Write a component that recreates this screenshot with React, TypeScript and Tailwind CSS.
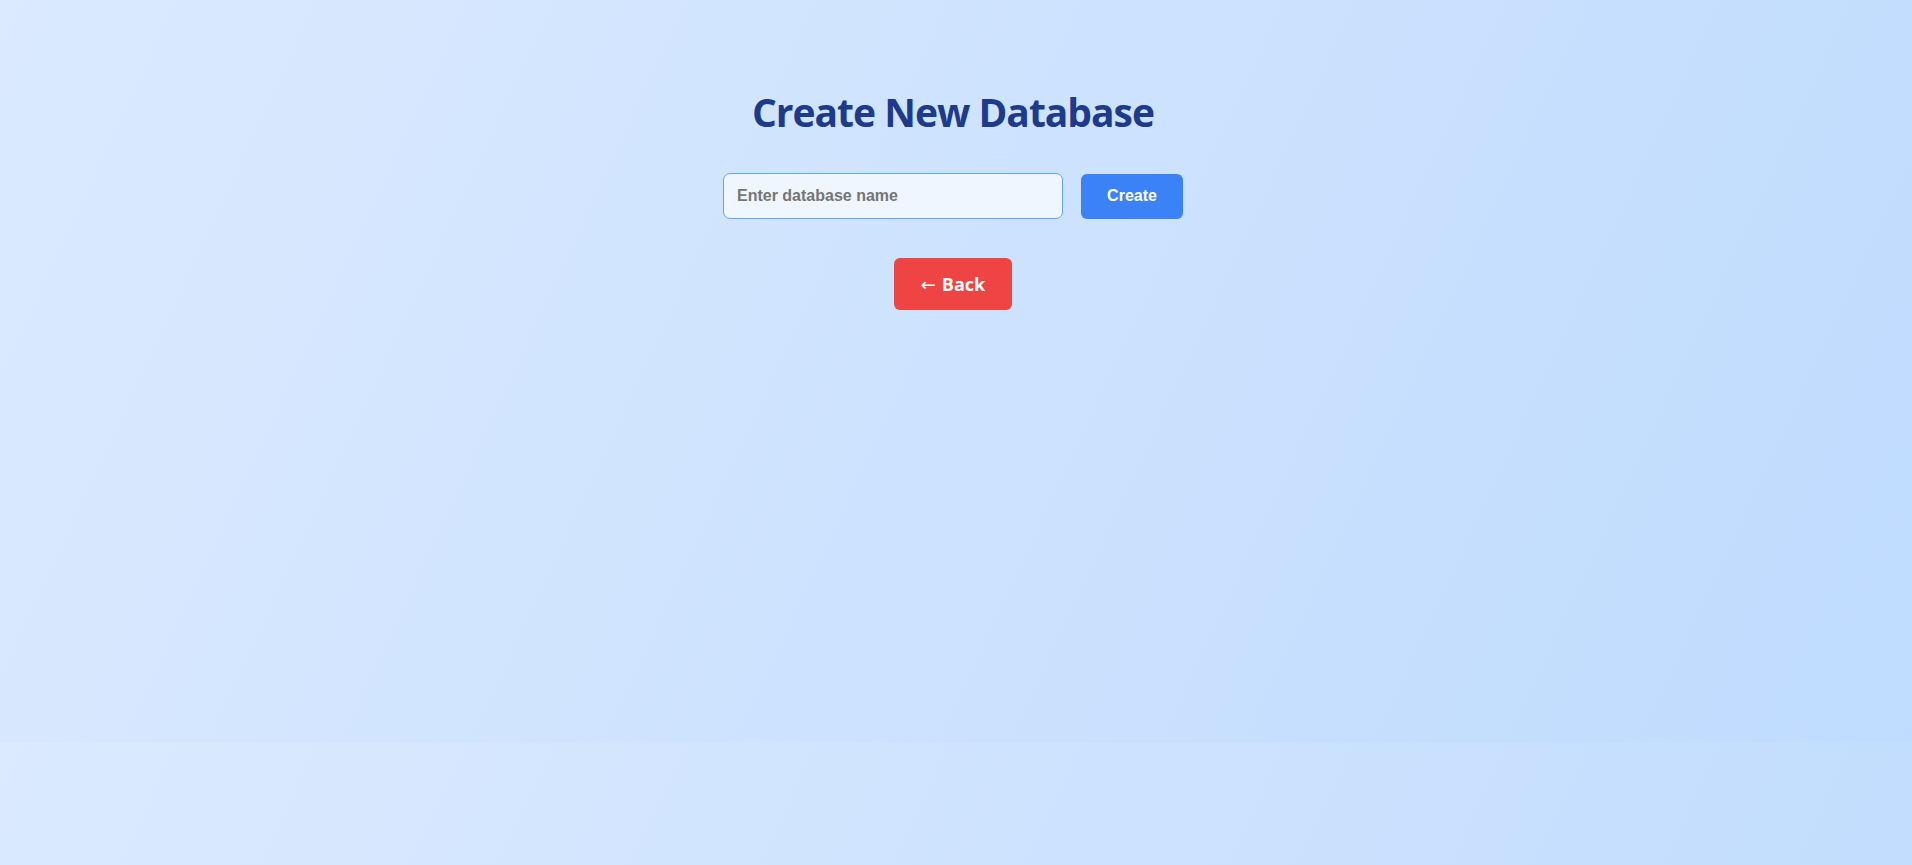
import React from "react";

export default function App() {
  return (
    <div className="h-screen w-full overflow-hidden bg-[linear-gradient(115deg,#dbeafe,#bfdbfe)] bg-[length:100%_743px] bg-repeat-y">
      <div className="flex flex-col items-center pt-[92px] pr-[6px]">
        <h1 className="font-['Open_Sans',sans-serif] text-[39px] font-bold leading-none tracking-[-1px] text-[#1e3a8a]">
          Create New Database
        </h1>
        <div className="mt-[42px] flex items-center gap-[18px]">
          <input
            type="text"
            placeholder="Enter database name"
            className="h-[46px] w-[340px] rounded-[7px] border border-[#60a5fa] bg-[#eff6ff] px-[13px] font-['Liberation_Sans',Arial,sans-serif] text-[16px] font-bold text-gray-700 outline-none placeholder:text-[#757575]"
          />
          <button className="h-[45px] w-[102px] rounded-[6px] bg-[#3b82f6] font-['Liberation_Sans',Arial,sans-serif] text-[16px] font-bold text-white">
            Create
          </button>
        </div>
        <button className="mt-[39px] flex h-[52px] w-[118px] items-center justify-center gap-[6px] rounded-[6px] bg-[#ef4444] font-['Open_Sans',sans-serif] text-[18px] font-bold text-white">
          <span className="font-['DejaVu_Sans',sans-serif] font-normal">←</span>
          <span>Back</span>
        </button>
      </div>
    </div>
  );
}
